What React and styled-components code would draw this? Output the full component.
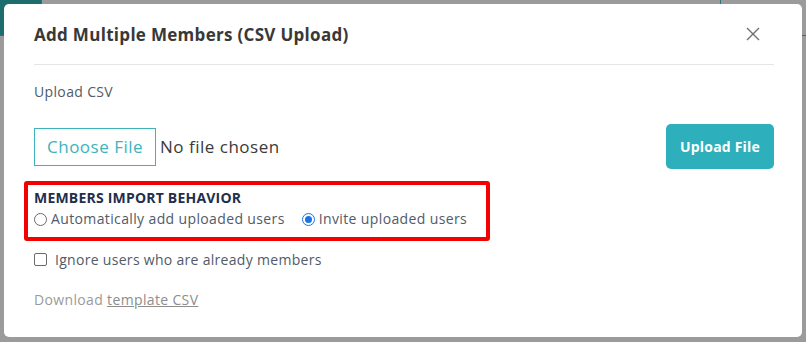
import React, { useState } from "react";
import styled, { createGlobalStyle } from "styled-components";

const GlobalStyle = createGlobalStyle`
	html, body {
		margin: 0;
		padding: 0;
		width: 806px;
		height: 342px;
		overflow: hidden;
		background: #9a9a9a;
		font-family: "Open Sans", "Liberation Sans", sans-serif;
	}
`;

const Backdrop = styled.div`
	position: relative;
	width: 806px;
	height: 342px;
	background: #9b9b9b;
	padding: 4px 4px 5px 4px;
	box-sizing: border-box;
`;

// dimmed page content peeking out behind the modal
const GhostButton = styled.div`
	position: absolute;
	top: -6px;
	left: ${(p) => p.left}px;
	width: ${(p) => p.width}px;
	height: 40px;
	border-radius: 6px;
	background: ${(p) => (p.filled ? "#1d6d6f" : "transparent")};
	border: 1px solid #2f7476;
`;

const Modal = styled.div`
	position: relative;
	height: 100%;
	background: #fff;
	border-radius: 5px;
	padding: 0 28px 0 30px;
	box-sizing: border-box;
	display: flex;
	flex-direction: column;
`;

const Header = styled.div`
	display: flex;
	align-items: center;
	justify-content: space-between;
	height: 60px;
	border-bottom: 1px solid #e6e6e6;
`;

const Title = styled.h2`
	margin: 0;
	font-size: 17px;
	font-weight: 700;
	color: #383838;
	letter-spacing: 0.3px;
`;

const Close = styled.button`
	border: 0;
	background: none;
	padding: 0;
	margin-right: 14px;
	display: flex;
	cursor: pointer;
`;

const Label = styled.div`
	margin-top: 17px;
	font-size: 14px;
	color: #4f5b69;
	letter-spacing: 0.35px;
`;

const UploadRow = styled.div`
	display: flex;
	align-items: center;
	justify-content: space-between;
	margin-top: 23px;
`;

const FileGroup = styled.div`
	display: flex;
	align-items: center;
	gap: 4px;
`;

const ChooseButton = styled.label`
	display: flex;
	align-items: center;
	height: 38px;
	padding: 0 12px;
	box-sizing: border-box;
	border: 1px solid #3db3bc;
	font-size: 17px;
	color: #3db3bc;
	letter-spacing: 0.5px;
	cursor: pointer;
`;

const FileName = styled.span`
	font-size: 17px;
	color: #3a3a3a;
	letter-spacing: 0.5px;
`;

const UploadButton = styled.button`
	height: 45px;
	padding: 0 14px;
	border: 0;
	border-radius: 5px;
	background: #2eb0bc;
	color: #fff;
	font-family: inherit;
	font-size: 14px;
	font-weight: 700;
	letter-spacing: 0.2px;
	cursor: pointer;
`;

const Highlight = styled.div`
	margin: 12px 0 0 -10px;
	width: 466px;
	height: 60px;
	box-sizing: border-box;
	border: 4px solid #f30000;
	border-radius: 3px;
	padding: 4px 6px 0 6px;
`;

const SectionTitle = styled.div`
	font-size: 14px;
	font-weight: 700;
	color: #1f2f4c;
	line-height: 18px;
	letter-spacing: 0.2px;
`;

const RadioRow = styled.div`
	display: flex;
	align-items: center;
	gap: 17px;
	margin-top: 3px;
`;

const Option = styled.label`
	display: flex;
	align-items: center;
	gap: 4px;
	font-size: 14px;
	color: #4f5b69;
	line-height: 18px;
	letter-spacing: 0.37px;
	cursor: pointer;
`;

const Radio = styled.span`
	width: 13px;
	height: 13px;
	box-sizing: border-box;
	border-radius: 50%;
	border: 1px solid ${(p) => (p.checked ? "#1a73e8" : "#6b6b6b")};
	display: flex;
	align-items: center;
	justify-content: center;
	&::after {
		content: "";
		width: 7px;
		height: 7px;
		border-radius: 50%;
		background: ${(p) => (p.checked ? "#1a73e8" : "transparent")};
	}
`;

const CheckRow = styled.label`
	display: flex;
	align-items: center;
	gap: 8px;
	margin-top: 9px;
	font-size: 14px;
	color: #4f5b69;
	letter-spacing: 0.3px;
	cursor: pointer;
`;

const Box = styled.span`
	width: 13px;
	height: 13px;
	box-sizing: border-box;
	border: 1px solid #6b6b6b;
	border-radius: 2px;
`;

const Download = styled.div`
	margin-top: 21px;
	font-size: 14px;
	color: #9a9a9a;
	letter-spacing: 0.35px;
	& a {
		color: #8d8d8d;
		text-decoration: underline;
	}
`;

const App = () => {
	const [mode, setMode] = useState("invite");

	return (
		<>
			<GlobalStyle />
			<Backdrop>
				<GhostButton filled left={-10} width={50} />
				<GhostButton left={720} width={90} />
				<Modal>
					<Header>
						<Title>Add Multiple Members (CSV Upload)</Title>
						<Close aria-label='close'>
							<svg width='14' height='14' viewBox='0 0 14 14'>
								<path
									d='M1 1L13 13M13 1L1 13'
									stroke='#6e6e6e'
									strokeWidth='1.4'
								/>
							</svg>
						</Close>
					</Header>
					<Label>Upload CSV</Label>
					<UploadRow>
						<FileGroup>
							<ChooseButton>Choose File</ChooseButton>
							<FileName>No file chosen</FileName>
						</FileGroup>
						<UploadButton>Upload File</UploadButton>
					</UploadRow>
					<Highlight>
						<SectionTitle>MEMBERS IMPORT BEHAVIOR</SectionTitle>
						<RadioRow>
							<Option onClick={() => setMode("auto")}>
								<Radio checked={mode === "auto"} />
								Automatically add uploaded users
							</Option>
							<Option onClick={() => setMode("invite")}>
								<Radio checked={mode === "invite"} />
								Invite uploaded users
							</Option>
						</RadioRow>
					</Highlight>
					<CheckRow>
						<Box />
						Ignore users who are already members
					</CheckRow>
					<Download>
						Download <a href='#'>template CSV</a>
					</Download>
				</Modal>
			</Backdrop>
		</>
	);
};

export default App;
